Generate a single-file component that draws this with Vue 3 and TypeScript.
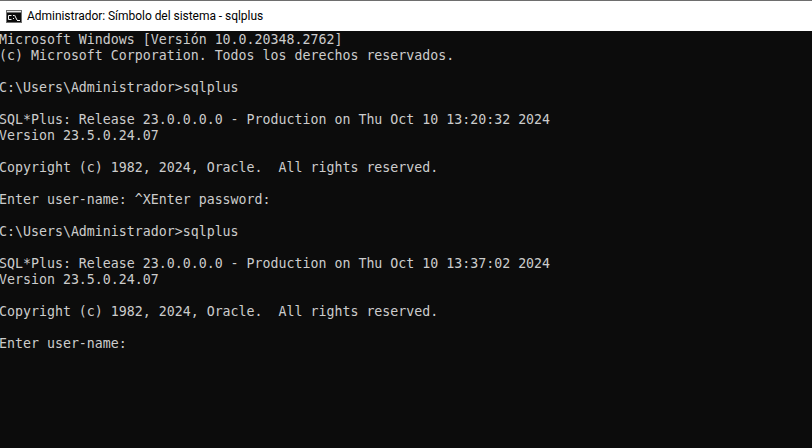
<script setup lang="ts">
const lines: string[] = [
  'Microsoft Windows [Versión 10.0.20348.2762]',
  '(c) Microsoft Corporation. Todos los derechos reservados.',
  '',
  'C:\\Users\\Administrador>sqlplus',
  '',
  'SQL*Plus: Release 23.0.0.0.0 - Production on Thu Oct 10 13:20:32 2024',
  'Version 23.5.0.24.07',
  '',
  'Copyright (c) 1982, 2024, Oracle.  All rights reserved.',
  '',
  'Enter user-name: ^XEnter password:',
  '',
  'C:\\Users\\Administrador>sqlplus',
  '',
  'SQL*Plus: Release 23.0.0.0.0 - Production on Thu Oct 10 13:37:02 2024',
  'Version 23.5.0.24.07',
  '',
  'Copyright (c) 1982, 2024, Oracle.  All rights reserved.',
  '',
  'Enter user-name:',
]
</script>

<template>
  <div class="window">
    <div class="edge"></div>
    <header class="titlebar">
      <svg class="icon" width="16" height="13" viewBox="0 0 16 13" aria-hidden="true">
        <rect x="0" y="0" width="16" height="13" fill="#6f6f6f" />
        <rect x="1" y="3" width="14" height="9" fill="#0c0c0c" />
        <rect x="1" y="1" width="14" height="1" fill="#e8e8e8" />
        <path d="M5.5 5.5H2.5V9.5H5.5M7 5.5H8M7 8.5H8M8.5 5L11 10M11 10.5H14" stroke="#f4f4f4" stroke-width="1" fill="none" />
      </svg>
      <span class="title">Administrador: Símbolo del sistema - sqlplus</span>
    </header>
    <main class="console">
      <div v-for="(line, i) in lines" :key="i" class="line">{{ line }}</div>
    </main>
  </div>
</template>

<style scoped>
.window {
  width: 812px;
  height: 448px;
  display: flex;
  flex-direction: column;
  overflow: hidden;
  background: #0c0c0c;
}
.edge {
  height: 1px;
  background: #6e6e6e;
}
.titlebar {
  height: 30px;
  background: #ffffff;
  display: flex;
  align-items: center;
  gap: 5px;
  padding-left: 6px;
  box-sizing: border-box;
}
.icon {
  flex: none;
}
.title {
  font-family: "Roboto", "Noto Sans", sans-serif;
  font-size: 12px;
  letter-spacing: -0.04px;
  color: #000000;
  white-space: nowrap;
}
.console {
  flex: 1;
  padding-top: 1px;
  background: #0c0c0c;
  color: #cccccc;
  font-family: "DejaVu Sans Mono", monospace;
  font-size: 13.28px;
}
.line {
  height: 16px;
  line-height: 16px;
  white-space: pre;
  margin-left: -1px;
}
</style>
